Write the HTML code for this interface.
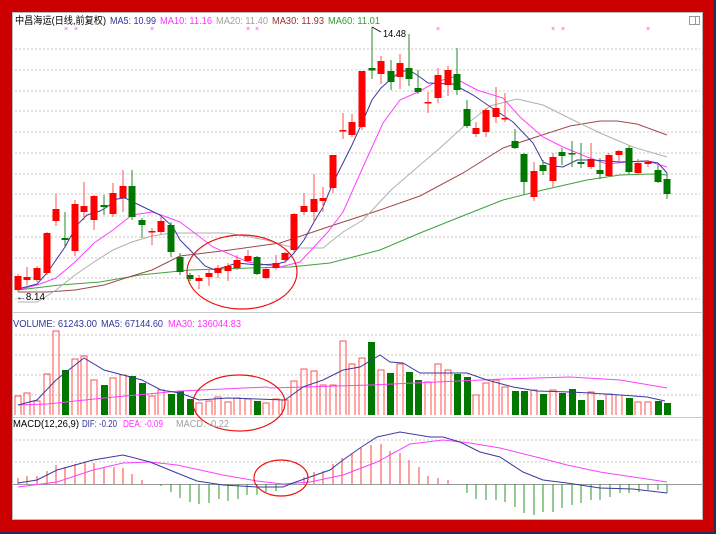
<!DOCTYPE html>
<html><head><meta charset="utf-8"><style>
html,body{margin:0;padding:0;background:#fff}
svg{display:block}
text{font-family:"Liberation Sans","Noto Sans CJK SC",sans-serif;font-size:10px}
</style></head><body>
<svg width="716" height="534" viewBox="0 0 716 534" xmlns="http://www.w3.org/2000/svg">
<rect x="0" y="0" width="716" height="534" fill="#cc0000"/>
<rect x="714" y="0" width="2" height="534" fill="#2a2a5a"/>
<rect x="0" y="532" width="716" height="2" fill="#2a2a5a"/>
<rect x="12.5" y="12.5" width="690" height="507" fill="#fff" stroke="#b8b8b8" stroke-width="1"/>
<g stroke="#c8c8c8" stroke-dasharray="2,2" stroke-width="1">
<path d="M15 49H700M15 70H700M15 91H700M15 111H700M15 132H700M15 153H700M15 174H700M15 194H700M15 216H700M15 237H700M15 258H700M15 278H700M15 299H700"/>
<path d="M15 335H700M15 355H700M15 375H700M15 395H700"/>
<path d="M15 440H700M15 462H700"/>
</g>
<path d="M13 312.5H702M13 417.5H702" stroke="#c8c8c8"/>
<path d="M13 484.5H702" stroke="#999"/>
<rect x="689.5" y="16.5" width="10" height="8" fill="none" stroke="#999"/><path d="M695.5 17v7" stroke="#999"/>
<text x="15" y="24" fill="#000" textLength="91" lengthAdjust="spacingAndGlyphs">中昌海运(日线,前复权)</text>
<text x="110" y="24" fill="#333399" textLength="46" lengthAdjust="spacingAndGlyphs">MA5: 10.99</text>
<text x="160" y="24" fill="#ff33ff" textLength="52" lengthAdjust="spacingAndGlyphs">MA10: 11.16</text>
<text x="216" y="24" fill="#a0a0a0" textLength="52" lengthAdjust="spacingAndGlyphs">MA20: 11.40</text>
<text x="272" y="24" fill="#993333" textLength="52" lengthAdjust="spacingAndGlyphs">MA30: 11.93</text>
<text x="328" y="24" fill="#33a033" textLength="52" lengthAdjust="spacingAndGlyphs">MA60: 11.01</text>
<g fill="#ff33ff"><text x="64" y="31" style="font-size:7px">×</text><text x="74" y="31" style="font-size:7px">×</text><text x="150" y="31" style="font-size:7px">×</text><text x="246" y="31" style="font-size:7px">×</text><text x="255" y="31" style="font-size:7px">×</text><text x="436" y="31" style="font-size:7px">×</text><text x="551" y="31" style="font-size:7px">×</text><text x="561" y="31" style="font-size:7px">×</text><text x="646" y="31" style="font-size:7px">×</text></g>
<g fill="none" stroke-width="1">
<polyline stroke="#40a040" points="18,290 60,285 100,282 140,275 190,270 250,268 290,267 330,263 380,250 420,233 460,217 503,200 543,190 587,180 620,175 653,174 667,175"/>
<polyline stroke="#a04848" points="18,292 47,292 75,290 104,285 132,276 152,270 180,256 230,250 280,243 340,223 380,210 420,196 463,173 503,148 533,138 570,126 600,121 617,121 637,124 667,135"/>
<polyline stroke="#b0b0b0" points="18,302 37,302 47,296 56,290 75,275 94,262 113,250 132,242 152,236 171,233 190,233 228,233 266,240 294,248 323,248 343,232 363,220 391,190 420,165 440,148 463,127 490,106 517,99 543,105 573,120 600,133 633,147 667,157"/>
<polyline stroke="#ff40ff" points="18,290 37,285 56,278 75,262 94,243 113,230 132,215 152,212 161,215 180,222 213,247 248,262 280,267 300,262 327,233 343,212 363,167 383,123 400,100 418,92 436,82 453,77 477,90 503,98 520,117 543,137 563,147 587,157 607,164 627,162 647,161 667,167"/>
<polyline stroke="#3a3aa0" points="18,289 37,284 47,273 56,260 65,247 77,225 87,215 100,211 107,207 117,199 125,198 133,202 160,215 173,227 180,240 190,250 205,266 215,270 237,263 257,265 276,264 285,262 294,253 304,240 314,222 323,207 333,183 343,163 352,145 362,123 372,100 381,88 391,79 400,72 409,70 420,77 428,83 453,84 473,95 495,110 513,122 533,143 543,162 553,166 563,167 577,160 593,160 620,162 647,161 658,163 667,173"/>
</g>
<g stroke-width="1">
<g stroke="#ff5050"><path d="M18 274V292M27 267V285M37 266V282M47 232V275M56 194V226M75 200V256M84 182V220M94 195V230M113 183V217M123 170V212M152 228V245M161 217V234M199 275V289M209 270V286M218 265V278M228 263V281M237 255V270M248 250V262M266 267V279M276 255V270M285 252V263M294 213V252M304 193V215M314 174V222M323 187V212M333 155V193M343 113V139M352 114V137M362 71V130M381 56V84M400 54V89M428 92V113M438 68V103M448 66V96M476 122V137M486 108V137M496 87V123M505 93V122M534 162V201M553 153V187M591 143V169M609 153V177M619 150V162M638 159V174M648 160V167"/></g>
<g stroke="#2a8a2a"><path d="M65 212V248M104 195V215M132 170V220M142 218V238M171 222V257M180 253V275M190 273V281M257 256V275M372 27V79M391 60V90M409 34V86M418 70V94M457 48V95M467 100V128M515 129V149M524 153V194M543 160V175M562 148V165M572 141V167M581 143V168M600 158V179M629 146V174M658 165V183M667 173V199"/></g>
<g fill="#ff0000"><rect x="14.5" y="276" width="7" height="14"/><rect x="23.5" y="277" width="7" height="3"/><rect x="33.5" y="268" width="7" height="12"/><rect x="43.5" y="233" width="7" height="40"/><rect x="52.5" y="209" width="7" height="12"/><rect x="71.5" y="204" width="7" height="47"/><rect x="80.5" y="206" width="7" height="6"/><rect x="90.5" y="196" width="7" height="24"/><rect x="109.5" y="193" width="7" height="21"/><rect x="119.5" y="186" width="7" height="12"/><rect x="148.5" y="231" width="7" height="1.5"/><rect x="157.5" y="221" width="7" height="11"/><rect x="195.5" y="278" width="7" height="3"/><rect x="205.5" y="273" width="7" height="4"/><rect x="214.5" y="268" width="7" height="5"/><rect x="224.5" y="266" width="7" height="5"/><rect x="233.5" y="260" width="7" height="8"/><rect x="244.5" y="256" width="7" height="5"/><rect x="262.5" y="269" width="7" height="9"/><rect x="272.5" y="263" width="7" height="5"/><rect x="281.5" y="253" width="7" height="7"/><rect x="290.5" y="214" width="7" height="36"/><rect x="300.5" y="206" width="7" height="6"/><rect x="310.5" y="199" width="7" height="13"/><rect x="319.5" y="198" width="7" height="3"/><rect x="329.5" y="155" width="7" height="33"/><rect x="339.5" y="130" width="7" height="1.5"/><rect x="348.5" y="122" width="7" height="13"/><rect x="358.5" y="71" width="7" height="56"/><rect x="377.5" y="61" width="7" height="13"/><rect x="396.5" y="63" width="7" height="14"/><rect x="424.5" y="102" width="7" height="1.5"/><rect x="434.5" y="75" width="7" height="23"/><rect x="444.5" y="70" width="7" height="15"/><rect x="472.5" y="128" width="7" height="6"/><rect x="482.5" y="110" width="7" height="22"/><rect x="492.5" y="108" width="7" height="9"/><rect x="501.5" y="118" width="7" height="1.5"/><rect x="530.5" y="171" width="7" height="26"/><rect x="549.5" y="157" width="7" height="24"/><rect x="587.5" y="159" width="7" height="8"/><rect x="605.5" y="155" width="7" height="21"/><rect x="615.5" y="151" width="7" height="4"/><rect x="634.5" y="163" width="7" height="10"/><rect x="644.5" y="162" width="7" height="2"/></g>
<g fill="#007800"><rect x="61.5" y="238" width="7" height="2"/><rect x="100.5" y="205" width="7" height="2"/><rect x="128.5" y="186" width="7" height="31"/><rect x="138.5" y="220" width="7" height="5"/><rect x="167.5" y="225" width="7" height="27"/><rect x="176.5" y="257" width="7" height="15"/><rect x="186.5" y="275" width="7" height="4"/><rect x="253.5" y="257" width="7" height="17"/><rect x="368.5" y="68" width="7" height="2.5"/><rect x="387.5" y="71" width="7" height="11"/><rect x="405.5" y="68" width="7" height="11"/><rect x="414.5" y="88" width="7" height="4"/><rect x="453.5" y="74" width="7" height="16"/><rect x="463.5" y="109" width="7" height="17"/><rect x="511.5" y="141" width="7" height="7"/><rect x="520.5" y="154" width="7" height="28"/><rect x="539.5" y="165" width="7" height="6"/><rect x="558.5" y="152" width="7" height="4"/><rect x="568.5" y="153" width="7" height="1.5"/><rect x="577.5" y="162" width="7" height="2"/><rect x="596.5" y="170" width="7" height="4"/><rect x="625.5" y="148" width="7" height="24"/><rect x="654.5" y="170" width="7" height="12"/><rect x="663.5" y="179" width="7" height="15"/></g>
</g>
<path d="M372 27L381 32" stroke="#000" stroke-width="0.8"/>
<text x="383" y="37" fill="#000" textLength="23" lengthAdjust="spacingAndGlyphs">14.48</text>
<text x="16" y="300" fill="#000" textLength="29" lengthAdjust="spacingAndGlyphs">←8.14</text>
<ellipse cx="242" cy="272" rx="55" ry="37" fill="none" stroke="#ee1111" stroke-width="1.2"/>
<text x="13" y="327" fill="#333399" textLength="84" lengthAdjust="spacingAndGlyphs">VOLUME: 61243.00</text>
<text x="101" y="327" fill="#333399" textLength="62" lengthAdjust="spacingAndGlyphs">MA5: 67144.60</text>
<text x="168" y="327" fill="#ff33ff" textLength="73" lengthAdjust="spacingAndGlyphs">MA30: 136044.83</text>
<g fill="none" stroke="#ff5050" stroke-width="1">
<path d="M15 415V396h6V415M24 415V393h6V415M34 415V401h6V415M44 415V374h6V415M53 415V331h6V415M72 415V359h6V415M81 415V356h6V415M91 415V380h6V415M110 415V378h6V415M120 415V375h6V415M149 415V396h6V415M158 415V390h6V415M196 415V403h6V415M206 415V401h6V415M215 415V397h6V415M225 415V402h6V415M234 415V398h6V415M245 415V399h6V415M263 415V403h6V415M273 415V399h6V415M282 415V400h6V415M291 415V381h6V415M301 415V369h6V415M311 415V371h6V415M320 415V385h6V415M330 415V385h6V415M340 415V341h6V415M349 415V364h6V415M359 415V358h6V415M378 415V370h6V415M397 415V364h6V415M425 415V382h6V415M435 415V364h6V415M445 415V370h6V415M473 415V395h6V415M483 415V383h6V415M493 415V380h6V415M502 415V387h6V415M531 415V390h6V415M550 415V390h6V415M588 415V392h6V415M606 415V394h6V415M616 415V395h6V415M635 415V402h6V415M645 415V402h6V415"/>
</g>
<g fill="#007800">
<rect x="62" y="370" width="7" height="45"/><rect x="101" y="385" width="7" height="30"/><rect x="129" y="376" width="7" height="39"/><rect x="139" y="383" width="7" height="32"/><rect x="168" y="394" width="7" height="21"/><rect x="177" y="391" width="7" height="24"/><rect x="187" y="399" width="7" height="16"/><rect x="254" y="401" width="7" height="14"/><rect x="368" y="342" width="7" height="73"/><rect x="387" y="373" width="7" height="42"/><rect x="406" y="372" width="7" height="43"/><rect x="415" y="380" width="7" height="35"/><rect x="454" y="374" width="7" height="41"/><rect x="464" y="377" width="7" height="38"/><rect x="512" y="391" width="7" height="24"/><rect x="521" y="391" width="7" height="24"/><rect x="540" y="394" width="7" height="21"/><rect x="559" y="393" width="7" height="22"/><rect x="569" y="389" width="7" height="26"/><rect x="578" y="400" width="7" height="15"/><rect x="597" y="400" width="7" height="15"/><rect x="626" y="398" width="7" height="17"/><rect x="655" y="401" width="7" height="14"/><rect x="664" y="403" width="7" height="12"/>
</g>
<g fill="none" stroke-width="1">
<polyline stroke="#ff40ff" points="18,405 47,404 104,398 180,391 267,387 270,388 370,385 437,382 503,379 570,377 620,380 667,388"/>
<polyline stroke="#3a3aa0" points="18,405 37,400 56,380 75,365 84,358 104,370 123,375 142,380 161,390 180,393 199,400 228,398 257,399 285,400 303,387 323,380 343,370 360,367 380,355 390,362 403,363 420,373 437,373 467,373 487,380 513,387 537,391 570,392 590,393 620,395 647,397 665,401"/>
</g>
<ellipse cx="239" cy="403" rx="46" ry="28" fill="none" stroke="#ee1111" stroke-width="1.2"/>
<text x="13" y="427" fill="#000" textLength="66" lengthAdjust="spacingAndGlyphs">MACD(12,26,9)</text>
<text x="82" y="427" fill="#333399" textLength="35" lengthAdjust="spacingAndGlyphs">DIF: -0.20</text>
<text x="123" y="427" fill="#ff33ff" textLength="40" lengthAdjust="spacingAndGlyphs">DEA: -0.09</text>
<text x="176" y="427" fill="#a0a0a0" textLength="53" lengthAdjust="spacingAndGlyphs">MACD: -0.22</text>
<g stroke="#ff4040" stroke-width="1">
<path d="M18 484V478M27 484V476M37 484V476M47 484V471M56 484V465M65 484V467M75 484V464M85 484V462M94 484V463M104 484V467M114 484V467M123 484V468M132 484V474M142 484V480M304 484V477M314 484V472M323 484V471M333 484V464M342 484V458M352 484V454M361 484V448M371 484V445M381 484V444M390 484V451M400 484V453M409 484V460M419 484V467M428 484V476M438 484V478M448 484V480"/>
</g>
<g stroke="#2a9a2a" stroke-width="1">
<path d="M161 484V486M171 484V492M180 484V498M190 484V502M199 484V504M209 484V503M219 484V499M228 484V501M238 484V499M247 484V495M257 484V495M266 484V492M276 484V491M467 484V493M476 484V499M486 484V500M496 484V500M505 484V502M515 484V507M524 484V513M534 484V515M543 484V512M553 484V512M562 484V508M572 484V505M581 484V503M591 484V500M600 484V500M610 484V497M620 484V493M629 484V493M639 484V492M648 484V490M658 484V490M667 484V493"/>
</g>
<g fill="none" stroke-width="1">
<polyline stroke="#ff40ff" points="18,487 57,482 93,470 123,463 150,462 177,465 223,475 257,481 283,484 310,482 343,475 377,462 410,444 443,440 470,443 500,448 540,458 567,465 600,472 633,477 667,482"/>
<polyline stroke="#3a3aa0" points="18,483 37,480 57,470 93,460 123,455 150,462 177,473 197,481 223,485 257,487 283,487 293,483 310,477 330,470 343,460 360,448 377,437 400,432 430,437 443,437 460,442 480,452 500,457 523,472 543,480 567,483 600,488 633,489 667,493"/>
</g>
<ellipse cx="281" cy="478" rx="27" ry="18" fill="none" stroke="#ee1111" stroke-width="1.2"/>
</svg>
</body></html>
